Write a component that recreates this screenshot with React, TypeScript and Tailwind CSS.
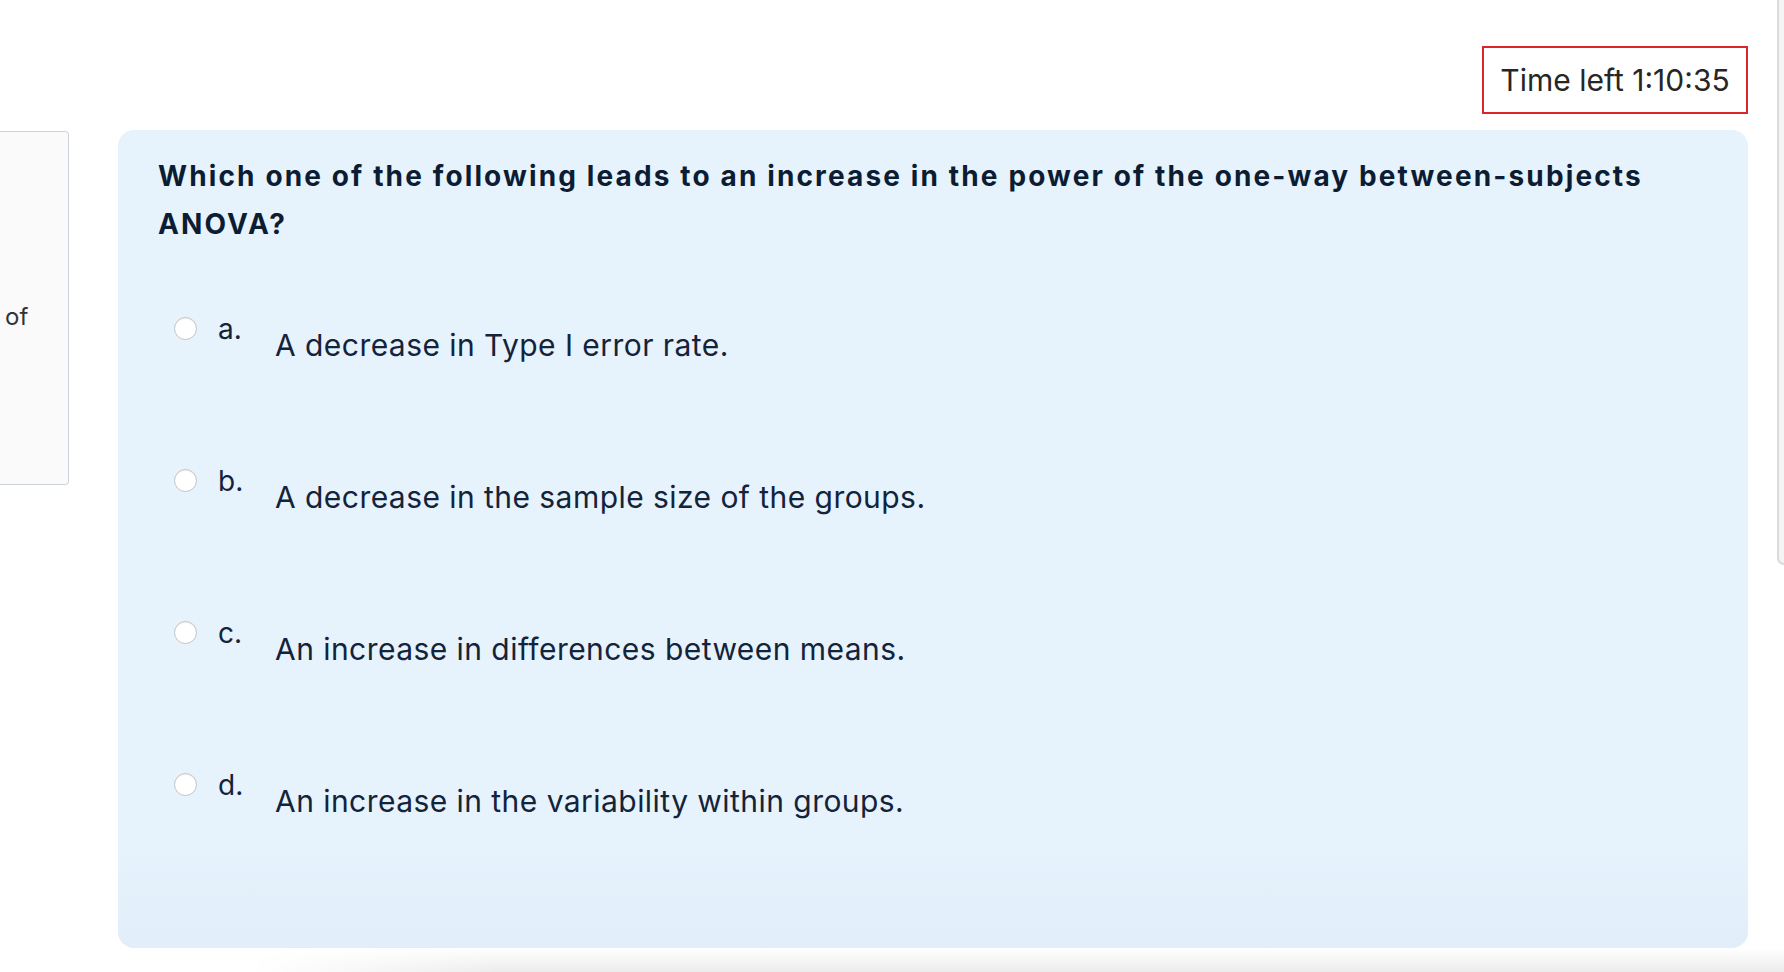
const options = [
  { key: "a.", text: "A decrease in Type I error rate." },
  { key: "b.", text: "A decrease in the sample size of the groups." },
  { key: "c.", text: "An increase in differences between means." },
  { key: "d.", text: "An increase in the variability within groups." },
];

function OptionRow({ label, text }: { label: string; text: string }) {
  return (
    <div className="flex h-[152px] items-start">
      <span className="mt-[3px] h-[23px] w-[23px] shrink-0 rounded-full border border-[#c4c4c4] bg-white shadow-[inset_0_1px_1px_rgba(0,0,0,0.06)]" />
      <span className="ml-[21px] w-[57px] text-[28px] leading-[31px] text-[#13233a]">{label}</span>
      <span className="mt-[11px] text-[30px] leading-[40px] tracking-[0.015em] text-[#13233a]">{text}</span>
    </div>
  );
}

export default function App() {
  return (
    <div className="relative h-[972px] w-full overflow-hidden bg-white font-['Inter',sans-serif]">
      <div className="absolute right-0 top-0 h-[565px] w-[7px] rounded-bl-[10px] border-b-2 border-l-2 border-[#dadada] bg-[#f4f4f4]" />

      <div className="flex justify-end pr-[36px] pt-[46px]">
        <div className="flex h-[68px] w-[266px] items-center justify-center border-2 border-[#d9262a] text-[30px] text-[#262626]">
          Time left 1:10:35
        </div>
      </div>

      <div className="mt-[16px] flex items-start">
        <div className="mt-px flex h-[354px] w-[69px] items-center rounded-r-[4px] border border-l-0 border-[#cdd3da] bg-[#fafafa] pl-[5px]">
          <span className="mt-[18px] text-[24px] text-[#333]">of</span>
        </div>

        <div className="ml-[49px] h-[818px] w-[1630px] rounded-[16px] bg-[linear-gradient(to_bottom,#e6f2fc_88%,#e1edf8)] pl-[40px] pr-[60px] pt-[22px]">
          <h2 className="text-[28px] font-bold leading-[48px] tracking-[0.076em] text-[#0c1d33]">
            Which one of the following leads to an increase in the power of the one-way between-subjects ANOVA?
          </h2>
          <div className="mt-[66px] pl-[16px]">
            {options.map((o) => (
              <OptionRow key={o.key} label={o.key} text={o.text} />
            ))}
          </div>
        </div>
      </div>

      <div className="absolute bottom-0 left-0 h-[24px] w-full bg-[linear-gradient(to_bottom,#ffffff,#ececec)] [mask-image:linear-gradient(to_right,transparent_250px,black_500px)]" />
    </div>
  );
}
